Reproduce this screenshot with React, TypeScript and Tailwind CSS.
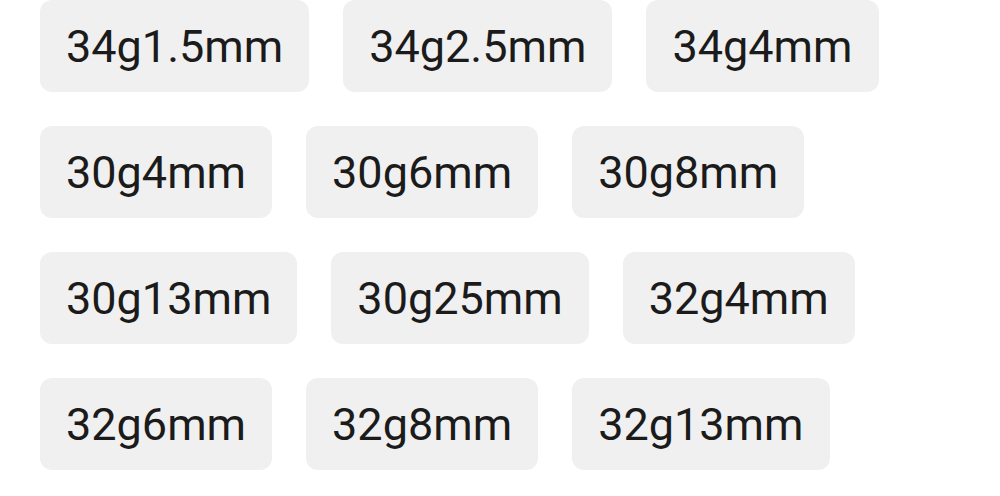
const sizes = [
  "34g1.5mm",
  "34g2.5mm",
  "34g4mm",
  "30g4mm",
  "30g6mm",
  "30g8mm",
  "30g13mm",
  "30g25mm",
  "32g4mm",
  "32g6mm",
  "32g8mm",
  "32g13mm",
];

export default function App() {
  return (
    <div className="min-h-screen bg-white pl-[40px] pr-[40px]" style={{ fontFamily: "Roboto, 'Noto Sans', sans-serif" }}>
      <div className="flex flex-wrap gap-x-[34px] gap-y-[34px]">
        {sizes.map((s) => (
          <button
            key={s}
            className="h-[92px] px-[26px] rounded-[12px] bg-[#f0f0f0] text-[45px] leading-none text-[#1b1b1b] flex items-center"
          >
            {s}
          </button>
        ))}
      </div>
    </div>
  );
}
